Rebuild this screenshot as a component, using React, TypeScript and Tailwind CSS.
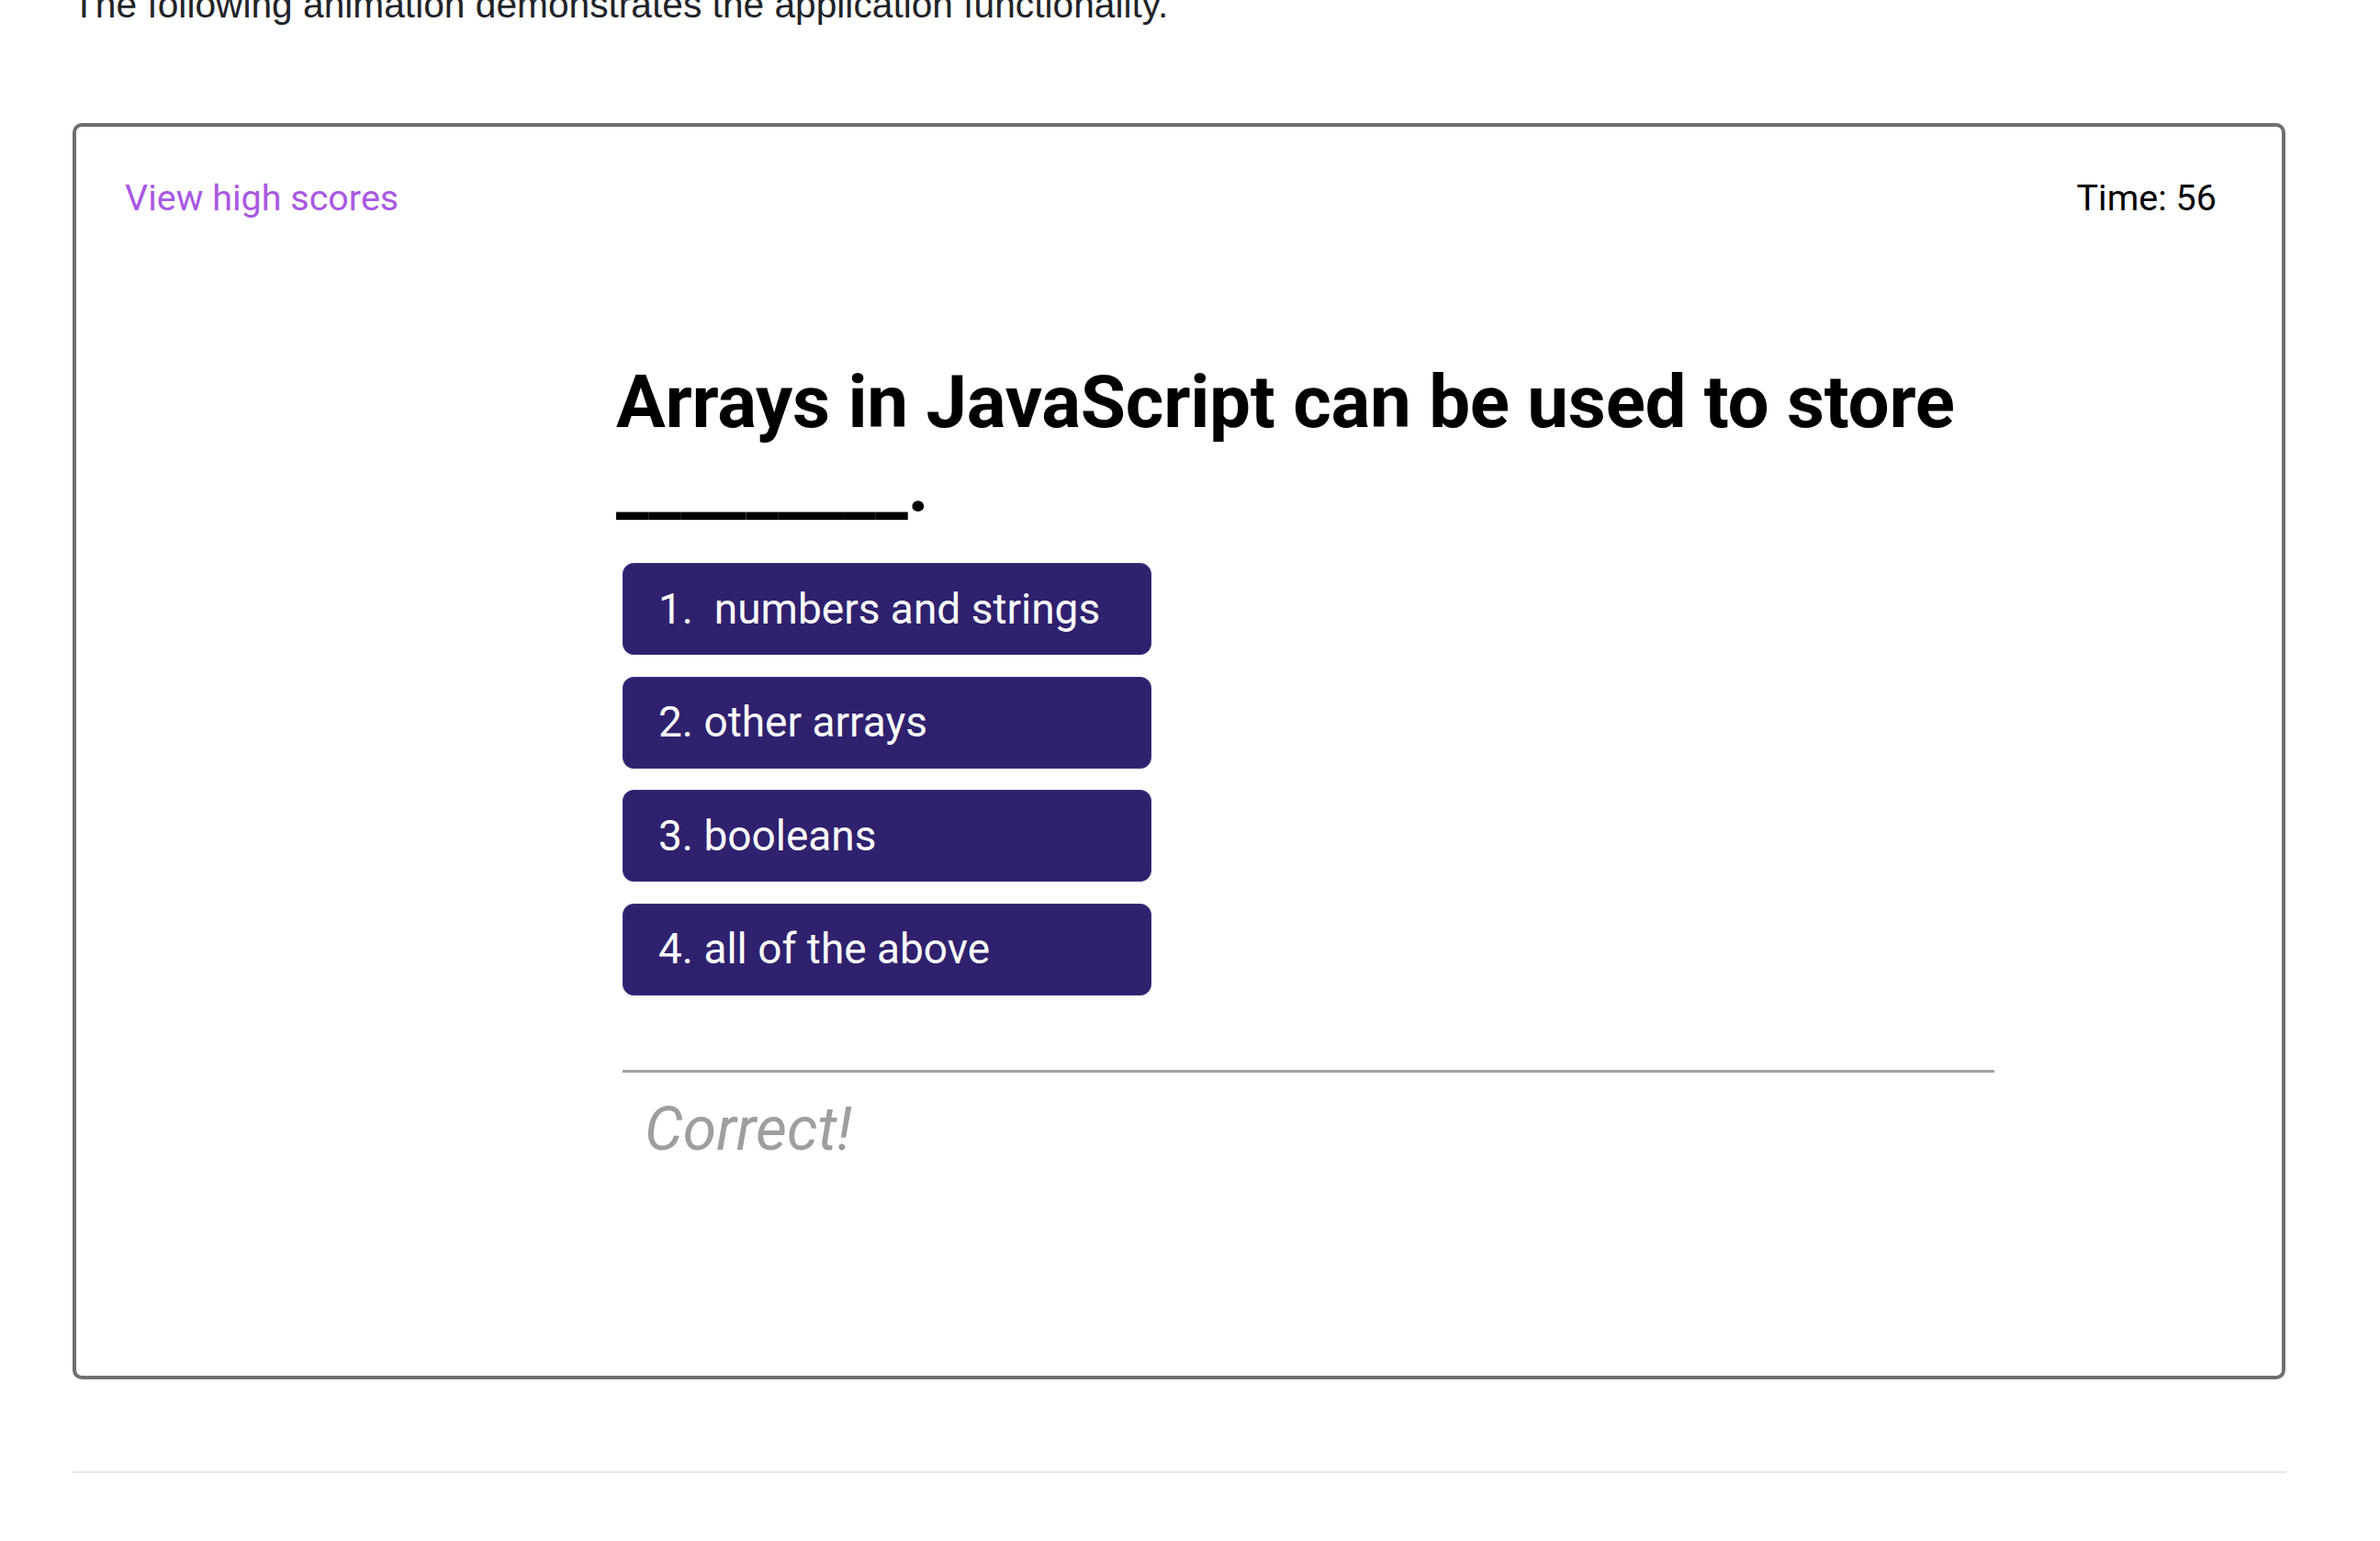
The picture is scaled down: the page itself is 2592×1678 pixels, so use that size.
import React from 'react';

const choices = ['1.  numbers and strings', '2. other arrays', '3. booleans', '4. all of the above'];

export default function App() {
  return (
    <div className="w-full h-[1678px] overflow-hidden bg-white px-[79px]">
      {/* Readme caption, scrolled partly out of view */}
      <p className="-mt-[19px] text-[40.7px] leading-[48px] text-[#1f2328] font-['Liberation_Sans',Arial,sans-serif] whitespace-nowrap">
        The following animation demonstrates the application functionality.
      </p>

      {/* Quiz demo frame */}
      <div className="mt-[105px] w-[2410px] h-[1368px] border-4 border-[#6f6f6f] rounded-[10px] font-['Roboto',sans-serif]">
        <div className="flex justify-between items-center pt-[54px] pl-[53px] pr-[71px] text-[39.5px] leading-[48px]">
          <a className="text-[#a858e2]">View high scores</a>
          <span className="text-black">Time: 56</span>
        </div>

        <div className="ml-[595px] w-[1494px] mt-[152px]">
          <h1 className="-ml-[7px] w-[1480px] text-[80px] leading-[92px] font-bold text-black tracking-[-0.3px]">
            Arrays in JavaScript can be used to store _________.
          </h1>

          <div className="mt-[37px] flex flex-col gap-[23.5px]">
            {choices.map((c) => (
              <button
                key={c}
                className="w-[576px] h-[100px] rounded-[12px] bg-[#2f216e] border border-[#3d2f80] pl-[38px] text-left text-white text-[46px] whitespace-pre"
              >
                {c}
              </button>
            ))}
          </div>

          <div className="mt-[81px] h-[3px] bg-[#a0a0a0]" />
          <p className="mt-[28px] pl-[24px] text-[66px] leading-[68px] italic text-[#9e9e9e]">Correct!</p>
        </div>
      </div>

      <div className="mt-[100px] w-[2411px] h-[2px] bg-[#e4e7eb]" />
    </div>
  );
}
